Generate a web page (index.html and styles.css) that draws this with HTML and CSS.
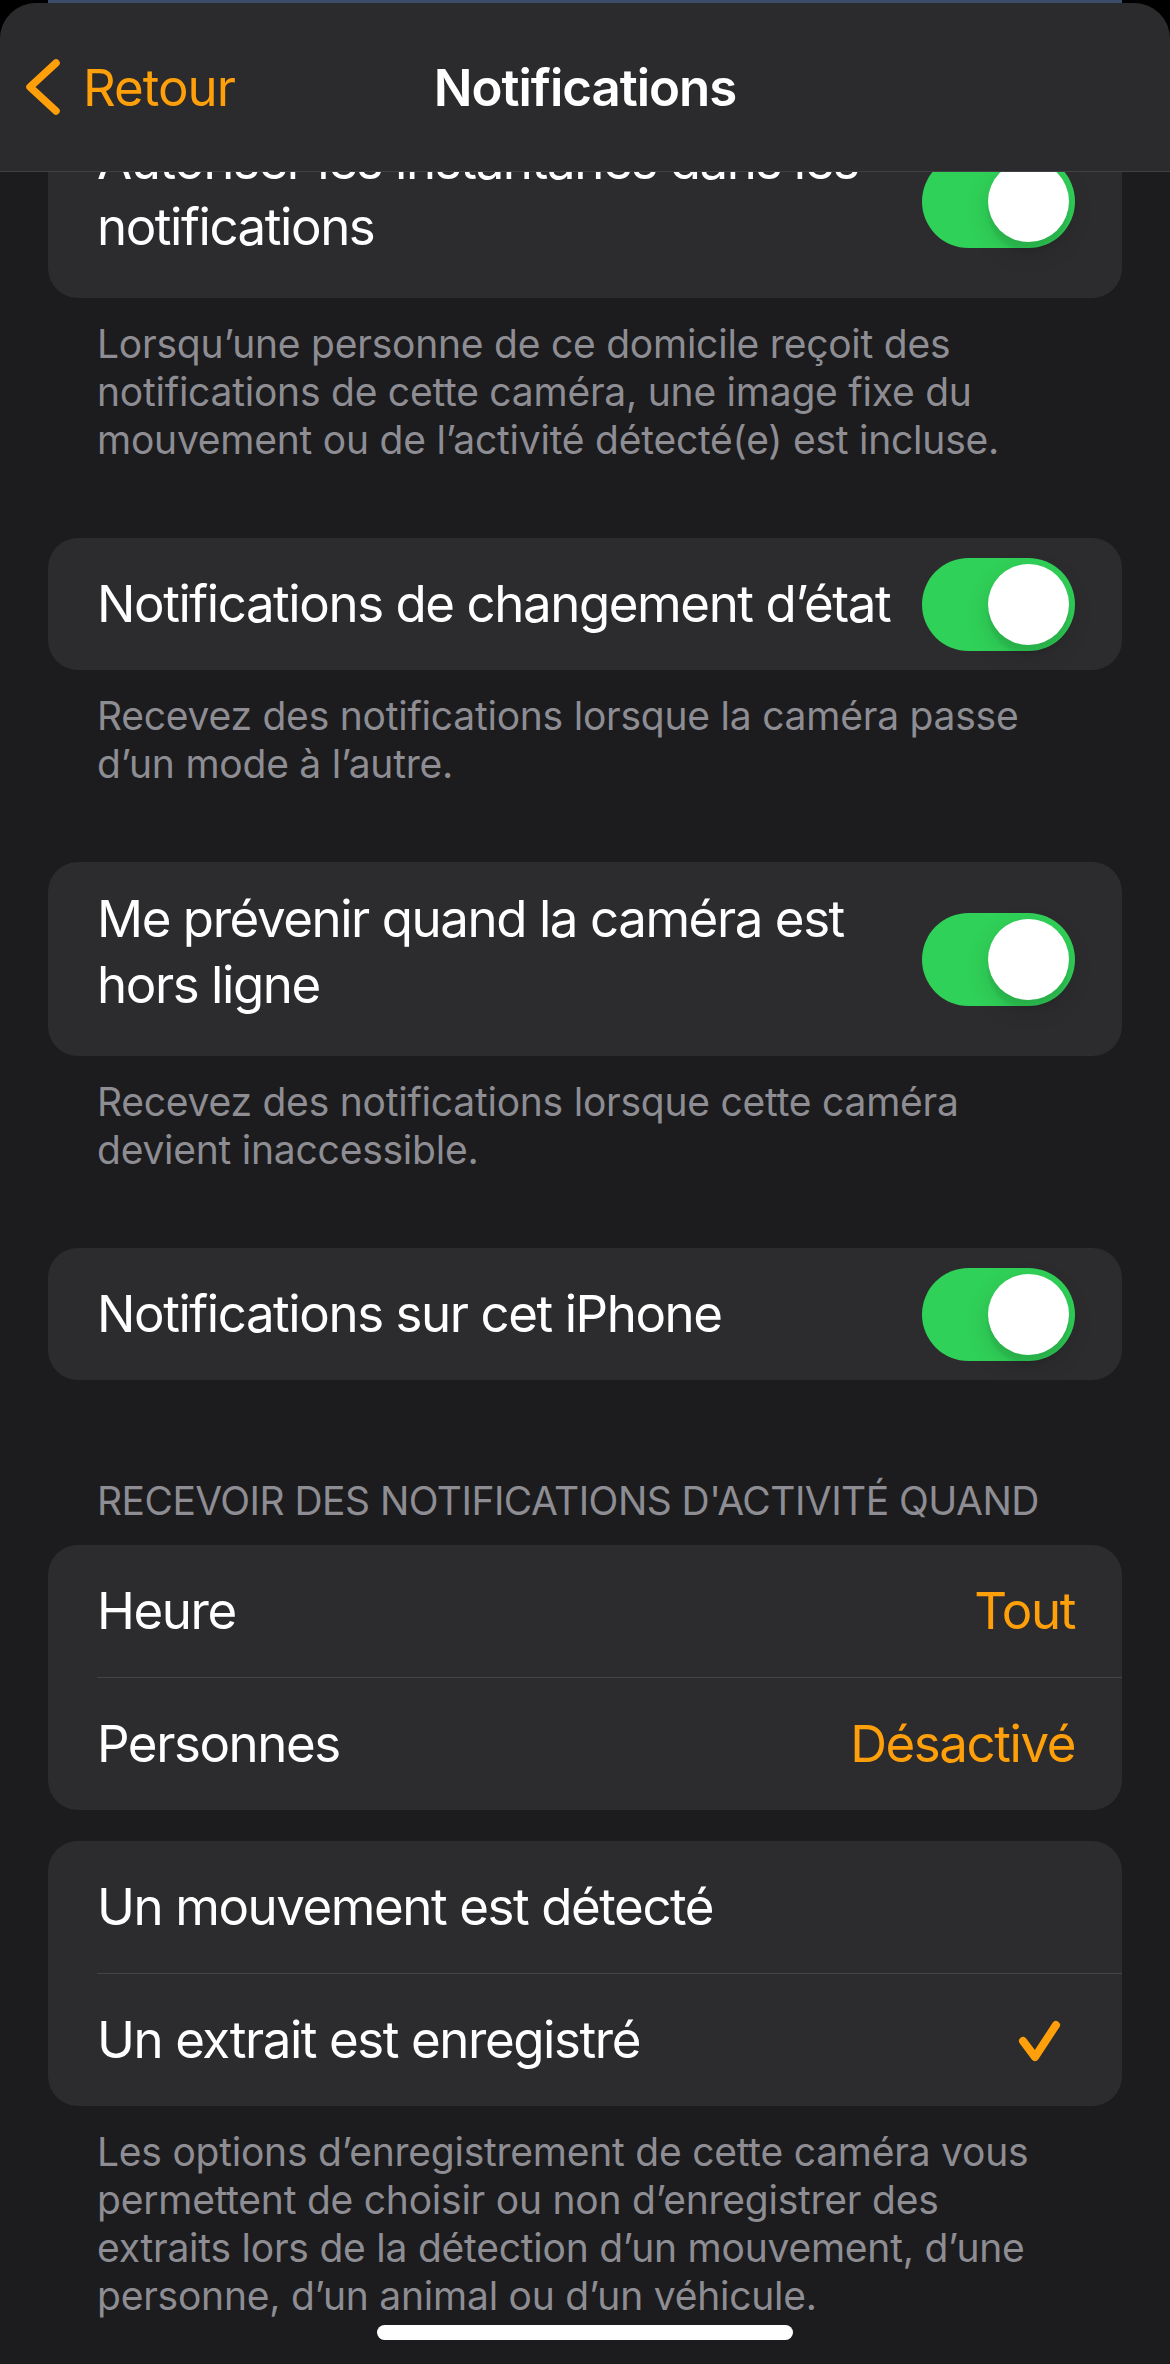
FILE: index.html
```html
<!DOCTYPE html>
<html lang="fr">
<head>
  <meta charset="utf-8">
  <title>Notifications</title>
  <link rel="stylesheet" href="styles.css">
</head>
<body>

<div class="peek"></div>

<div class="sheet">

  <div class="navbar">
    <a class="back" href="#">
      <svg class="chevron" width="44" height="64" viewBox="0 0 44 64"><path d="M34 8 L8 32 L34 56"/></svg>
      <span>Retour</span>
    </a>
    <h1 class="title">Notifications</h1>
    <span></span>
  </div>

  <div class="content">

    <div class="card">
      <div class="row row-tall">
        <span class="label">Autoriser les instantanés dans les notifications</span>
        <span class="switch"><span class="knob"></span></span>
      </div>
    </div>
    <p class="footer">Lorsqu’une personne de ce domicile reçoit des notifications de cette caméra, une image fixe du mouvement ou de l’activité détecté(e) est incluse.</p>

    <div class="card">
      <div class="row">
        <span class="label">Notifications de changement d’état</span>
        <span class="switch"><span class="knob"></span></span>
      </div>
    </div>
    <p class="footer">Recevez des notifications lorsque la caméra passe d’un mode à l’autre.</p>

    <div class="card">
      <div class="row row-tall">
        <span class="label">Me prévenir quand la caméra est hors ligne</span>
        <span class="switch"><span class="knob"></span></span>
      </div>
    </div>
    <p class="footer">Recevez des notifications lorsque cette caméra devient inaccessible.</p>

    <div class="card">
      <div class="row">
        <span class="label">Notifications sur cet iPhone</span>
        <span class="switch"><span class="knob"></span></span>
      </div>
    </div>

    <h2 class="section-header">RECEVOIR DES NOTIFICATIONS D'ACTIVITÉ QUAND</h2>

    <div class="card">
      <div class="row">
        <span class="label">Heure</span>
        <span class="value">Tout</span>
      </div>
      <div class="sep"></div>
      <div class="row">
        <span class="label">Personnes</span>
        <span class="value">Désactivé</span>
      </div>
    </div>

    <div class="card card-close">
      <div class="row">
        <span class="label">Un mouvement est détecté</span>
      </div>
      <div class="sep"></div>
      <div class="row">
        <span class="label">Un extrait est enregistré</span>
        <svg class="check" width="48" height="48" viewBox="0 0 48 48"><path d="M7 25 L19 41 L40 9"/></svg>
      </div>
    </div>
    <p class="footer">Les options d’enregistrement de cette caméra vous permettent de choisir ou non d’enregistrer des extraits lors de la détection d’un mouvement, d’une personne, d’un animal ou d’un véhicule.</p>

  </div>

  <div class="home-indicator"></div>

</div>

</body>
</html>
```

FILE: styles.css
```css
* {
  box-sizing: border-box;
}
html,
body {
  margin: 0;
}
body {
  width: 1170px;
  height: 2364px;
  overflow: hidden;
  background-color: #000;
  font-family: Inter, "Noto Sans", sans-serif;
}
.peek {
  height: 3px;
  margin: 0 48px;
  background-color: #3c4c6b;
}
.sheet {
  position: relative;
  height: 2361px;
  background-color: #1c1c1e;
  border-radius: 36px 36px 0 0;
  overflow: hidden;
}

/* nav bar sits over the scrolled list */
.navbar {
  position: absolute;
  top: 0;
  left: 0;
  right: 0;
  z-index: 2;
  height: 169px;
  display: grid;
  grid-template-columns: 1fr auto 1fr;
  align-items: center;
  background-color: #2b2b2d;
  border-bottom: 1px solid #404043;
}
.back {
  display: flex;
  align-items: center;
  padding-left: 22px;
  color: #ff9f0a;
  text-decoration: none;
  font-size: 51px;
  letter-spacing: -0.02em;
}
.back span {
  margin-left: 17px;
}
.chevron path {
  fill: none;
  stroke: #ff9f0a;
  stroke-width: 7.5;
  stroke-linecap: round;
  stroke-linejoin: round;
}
.title {
  margin: 0;
  color: #fff;
  font-size: 51px;
  font-weight: 600;
  letter-spacing: -0.02em;
}

.content {
  padding-top: 101px;
}
.card {
  margin: 0 48px;
  background-color: #2c2c2e;
  border-radius: 30px;
  overflow: hidden;
}
.footer + .card {
  margin-top: 74px;
}
.card-close {
  margin-top: 31px;
}
.row {
  display: flex;
  align-items: center;
  gap: 8px;
  min-height: 132px;
  padding: 0 47px 0 49px;
  color: #fff;
  font-size: 51px;
  line-height: 66px;
  letter-spacing: -0.028em;
}
.row-tall {
  padding-top: 24px;
  padding-bottom: 24px;
}
.row-tall .label {
  padding-bottom: 14px;
}
.label {
  flex: 1;
}
.value {
  color: #ff9f0a;
}
.sep {
  height: 1px;
  margin-left: 49px;
  background-color: #444448;
}
.switch {
  position: relative;
  flex: none;
  width: 153px;
  height: 93px;
  border-radius: 47px;
  background-color: #30d158;
}
.knob {
  position: absolute;
  top: 6px;
  right: 6px;
  width: 81px;
  height: 81px;
  border-radius: 50%;
  background-color: #fff;
  box-shadow: 0 9px 24px rgba(0, 0, 0, 0.15), 0 9px 3px rgba(0, 0, 0, 0.06);
}
.check {
  flex: none;
  margin-right: 11px;
}
.check path {
  fill: none;
  stroke: #ff9f0a;
  stroke-width: 8;
  stroke-linecap: round;
  stroke-linejoin: round;
}
.footer {
  margin: 0;
  padding: 22px 96px 0 97px;
  color: #8d8d93;
  font-size: 39px;
  line-height: 48px;
  letter-spacing: -0.006em;
}
.section-header {
  margin: 0;
  padding: 97px 96px 20px 97px;
  color: #8d8d93;
  font-size: 39px;
  font-weight: 400;
  line-height: 48px;
  letter-spacing: -0.014em;
}
.home-indicator {
  position: absolute;
  left: 377px;
  bottom: 24px;
  width: 416px;
  height: 15px;
  border-radius: 8px;
  background-color: #fff;
}
```
